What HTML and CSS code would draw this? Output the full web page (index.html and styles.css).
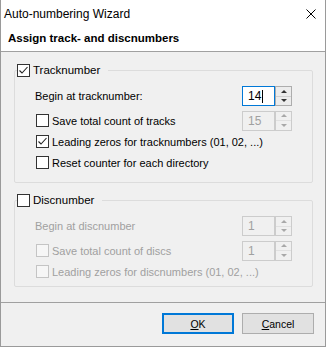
FILE: index.html
```html
<!DOCTYPE html>
<html lang="en">
  <head>
    <meta charset="UTF-8" />
    <title>Auto-numbering Wizard</title>
    <link rel="stylesheet" href="styles.css">
  </head>
  <body>
    <div class="dialog">
      <div class="titlebar">
        <span class="title">Auto-numbering Wizard</span>
        <svg class="close" width="10" height="10" viewBox="0 0 10 10">
          <path d="M0.5 0.5 L9.5 9.5 M9.5 0.5 L0.5 9.5" stroke="#000" stroke-width="1" fill="none" />
        </svg>
      </div>
      <div class="header">Assign track- and discnumbers</div>

      <div class="body">
        <fieldset class="group">
          <legend>
            <span class="check checked">
              <svg width="11" height="11" viewBox="0 0 11 11"><path d="M1.5 5.5 L4 8 L9.5 2" stroke="#222" stroke-width="1.1" fill="none" /></svg>
            </span>
            Tracknumber
          </legend>
          <div class="row first">
            <span class="label">Begin at tracknumber:</span>
            <div class="spin">
              <span class="field focus">14<span class="caret"></span></span>
              <span class="arrows"><span class="up"></span><span class="down"></span></span>
            </div>
          </div>
          <div class="row">
            <span class="check"></span>
            <span class="label">Save total count of tracks</span>
            <div class="spin disabled">
              <span class="field">15</span>
              <span class="arrows"><span class="up"></span><span class="down"></span></span>
            </div>
          </div>
          <div class="row">
            <span class="check checked">
              <svg width="11" height="11" viewBox="0 0 11 11"><path d="M1.5 5.5 L4 8 L9.5 2" stroke="#222" stroke-width="1.1" fill="none" /></svg>
            </span>
            <span class="label">Leading zeros for tracknumbers (01, 02, ...)</span>
          </div>
          <div class="row">
            <span class="check"></span>
            <span class="label">Reset counter for each directory</span>
          </div>
        </fieldset>

        <fieldset class="group second">
          <legend>
            <span class="check"></span>
            Discnumber
          </legend>
          <div class="row first off">
            <span class="label">Begin at discnumber</span>
            <div class="spin disabled">
              <span class="field">1</span>
              <span class="arrows"><span class="up"></span><span class="down"></span></span>
            </div>
          </div>
          <div class="row off">
            <span class="check"></span>
            <span class="label">Save total count of discs</span>
            <div class="spin disabled">
              <span class="field">1</span>
              <span class="arrows"><span class="up"></span><span class="down"></span></span>
            </div>
          </div>
          <div class="row off">
            <span class="check"></span>
            <span class="label">Leading zeros for discnumbers (01, 02, ...)</span>
          </div>
        </fieldset>
      </div>

      <div class="footer">
        <button class="btn default"><u>O</u>K</button>
        <button class="btn"><u>C</u>ancel</button>
      </div>
    </div>
  </body>
</html>
```

FILE: styles.css
```css
* {
  margin: 0;
  padding: 0;
  box-sizing: border-box;
}
body {
  width: 326px;
  height: 347px;
  background-color: #f0f0f0;
  color: #000;
  font: 11px "Liberation Sans", Arial, sans-serif;
  overflow: hidden;
}
.dialog {
  height: 347px;
  display: flex;
  flex-direction: column;
  border: 1px solid #9a9a9a;
  border-top: none;
}
.titlebar {
  height: 28px;
  background-color: #fff;
  display: flex;
  align-items: center;
  justify-content: space-between;
  padding: 0 9px 0 3px;
  font-size: 12px;
}
.header {
  height: 24px;
  background-color: #fff;
  border-bottom: 1px solid #a0a0a0;
  display: flex;
  align-items: center;
  padding: 0 0 3px 7px;
  font-size: 11.5px;
  font-weight: bold;
}
.body {
  flex: 1;
  padding: 11px 12px 0 13px;
}
.group {
  border: 1px solid #dcdcdc;
  border-radius: 2px;
  padding: 0 20px 9px 20px;
}
.group.second {
  margin-top: 10px;
  padding-bottom: 4px;
}
.group legend {
  display: flex;
  align-items: center;
  line-height: 14px;
  margin-left: -18px;
  padding-right: 8px;
  font-size: 11.5px;
}
.row {
  display: flex;
  align-items: center;
  height: 21px;
}
.row.first {
  height: 20px;
  margin-top: 9px;
  margin-bottom: 4px;
}
.row .label {
  flex: 1;
}
.row .check {
  margin-left: 1px;
}
.check {
  width: 13px;
  height: 13px;
  border: 1px solid #333;
  background-color: #fff;
  margin-right: 3px;
  display: flex;
  align-items: center;
  justify-content: center;
}
.off {
  color: #a0a0a0;
}
.off .check {
  border-color: #c4c4c4;
  background-color: #f6f6f6;
}
.spin {
  display: flex;
  width: 50px;
  height: 20px;
}
.spin .field {
  flex: 1;
  display: flex;
  align-items: center;
  padding-left: 5px;
  background-color: #fff;
  border: 1px solid #7a7a7a;
  font-size: 12px;
}
.spin .field.focus {
  border-color: #0078d7;
}
.caret {
  width: 1px;
  height: 13px;
  background-color: #000;
  margin-left: 1px;
}
.spin .arrows {
  width: 17px;
  display: flex;
  flex-direction: column;
  border: 1px solid #adadad;
  background-color: #ececec;
}
.arrows span {
  flex: 1;
  display: flex;
  align-items: center;
  justify-content: center;
}
.arrows .up {
  border-bottom: 1px solid #d0d0d0;
}
.arrows .up::after,
.arrows .down::after {
  content: "";
  border-left: 3px solid transparent;
  border-right: 3px solid transparent;
}
.arrows .up::after {
  border-bottom: 3px solid #333;
}
.arrows .down::after {
  border-top: 3px solid #333;
}
.spin.disabled .field {
  background-color: #f0f0f0;
  border-color: #cccccc;
  color: #a0a0a0;
}
.spin.disabled .arrows {
  border-color: #cccccc;
  background-color: #f0f0f0;
}
.spin.disabled .arrows .up {
  border-bottom-color: #e0e0e0;
}
.spin.disabled .arrows .up::after {
  border-bottom-color: #a8a8a8;
}
.spin.disabled .arrows .down::after {
  border-top-color: #a8a8a8;
}
.footer {
  height: 44px;
  border-top: 1px solid #a0a0a0;
  display: flex;
  justify-content: flex-end;
  align-items: flex-start;
  gap: 8px;
  padding: 10px 11px 0 0;
}
.btn {
  width: 72px;
  height: 21px;
  font: 10.5px "Liberation Sans", Arial, sans-serif;
  color: #000;
  background-color: #e1e1e1;
  border: 1px solid #adadad;
}
.btn.default {
  border: 2px solid #0078d7;
}
```
